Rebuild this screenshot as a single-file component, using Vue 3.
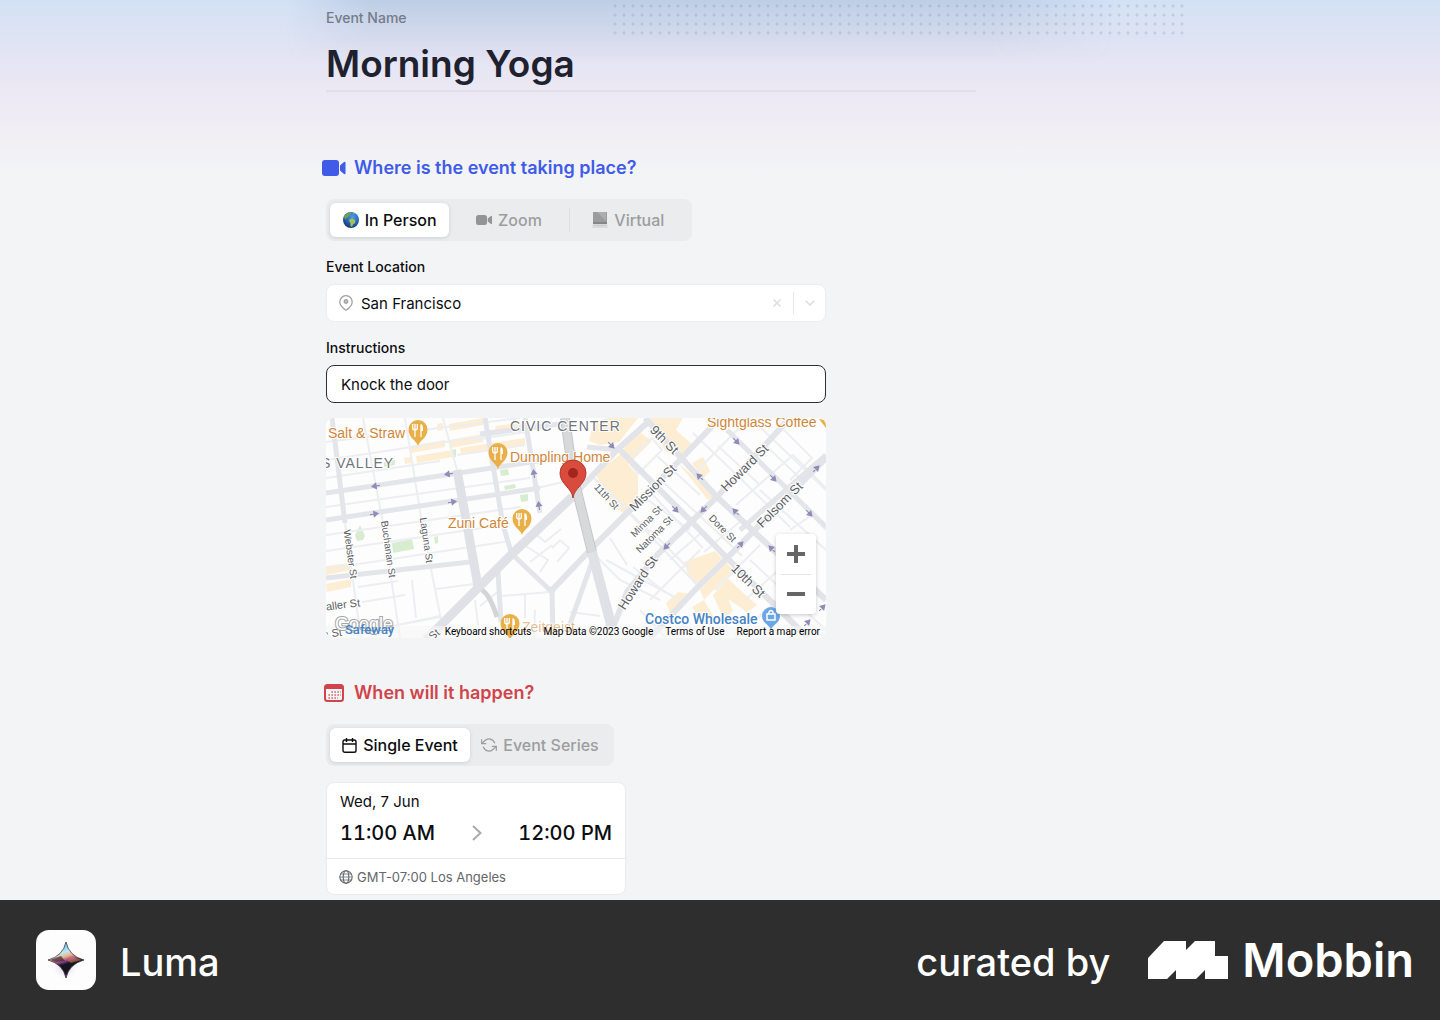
<script setup>
import { ref } from 'vue'

const eventName = ref('Morning Yoga')
const instructions = ref('Knock the door')
const eventPlace = ref('San Francisco')
const place = ref('person')
const kind = ref('single')

const minorRoads = [
  'M363 418L383 523L400 638', 'M405 418L422 523L442 625', 'M443 418L457 470',
  'M345 523L361 638', 'M326 460L565 424', 'M326 478L440 461', 'M326 442L520 418',
  'M326 507L530 478', 'M326 535L520 507', 'M326 551L510 524', 'M326 569L510 541',
  'M358 587L398 581', 'M362 602L405 595', 'M436 589L474 584',
  'M403 624L440 617', 'M365 632L440 616', 'M412 580L416 618', 'M502 596L550 592',
  'M525 594L525 618', 'M474 440L525 432', 'M457 455L525 445', 'M537 488L572 480',
  'M524 545L548 560L540 572M537 535L545 542L561 529M552 548L560 540L569 548L557 562',
  'M530 562L552 545', 'M593 477L630 514L700 588', 'M606 560L680 600', 'M592 552L620 580L660 600',
  'M610 538L627 565', 'M632 456L652 438L662 450L638 474L630 464', 'M650 492L703 548',
  'M663 482L715 530L742 556', 'M645 498L690 530', 'M656 455L700 495', 'M693 433L742 480L790 527',
  'M698 470L745 422', 'M718 446L760 485', 'M745 465L765 445L802 480', 'M736 505L793 455L826 488',
  'M760 490L826 550', 'M784 430L812 458L790 480', 'M770 507L808 470', 'M650 600L700 550',
  'M633 567L665 592', 'M650 530L690 570', 'M701 533L670 560', 'M704 552L742 520L790 565',
  'M745 600L790 560', 'M715 590L760 545', 'M735 638L780 598', 'M750 560L826 630',
  'M790 530L812 515L826 530', 'M570 612L600 616', 'M606 490L650 532', 'M480 606L500 590',
  'M535 610L534 638', 'M475 600L478 625', 'M640 610L666 638', 'M760 427L826 490'
]
const midRoads = [
  'M485 418L503 525L512 555', 'M525 418L540 513', 'M513 555L552 592L553 638',
  'M498 572L501 622', 'M570 624L592 562', 'M587 447L620 450', 'M480 434L560 424',
  'M326 520L540 488', 'M326 493L565 457', 'M332 418L345 523', 'M727 430L826 527',
  'M740 530L826 455', 'M326 578L470 562'
]
const mainRoads = [
  'M645 418L717 497L780 556L826 600', 'M620 450L693 523L727 558L808 638',
  'M720 418L680 460L592 548L552 590', 'M790 418L717 497L690 523L657 555L627 592L612 630',
  'M826 458L727 558L693 592L650 638', 'M647 423L617 450L572 497'
]
const arrows = [
  [376, 486, 172], [449, 474, 172], [374, 514, -8], [452, 502, -8], [534, 474, -98],
  [539, 506, -98], [611, 445, 45], [736, 441, 45], [773, 478, 45], [809, 513, 45],
  [700, 477, 225], [736, 512, 225], [704, 509, 135], [675, 509, 45], [667, 546, 135],
  [740, 545, -45], [816, 469, -45], [772, 549, 225], [822, 608, -45], [807, 623, -45]
]
const streets = [
  { t: '9th St', x: 664, y: 440, r: 45, s: 13 },
  { t: 'Mission St', x: 653, y: 488, r: -45, s: 13 },
  { t: 'Howard St', x: 745, y: 468, r: -45, s: 13 },
  { t: 'Folsom St', x: 780, y: 505, r: -45, s: 13 },
  { t: 'Howard St', x: 638, y: 583, r: -57, s: 13 },
  { t: '10th St', x: 748, y: 581, r: 45, s: 13 },
  { t: '11th St', x: 607, y: 496, r: 47, s: 10 },
  { t: 'Minna St', x: 646, y: 521, r: -45, s: 10 },
  { t: 'Natoma St', x: 654, y: 534, r: -45, s: 10 },
  { t: 'Dore St', x: 723, y: 528, r: 45, s: 10 },
  { t: 'Webster St', x: 351, y: 554, r: 82, s: 10 },
  { t: 'Buchanan St', x: 389, y: 549, r: 82, s: 10 },
  { t: 'Laguna St', x: 427, y: 540, r: 82, s: 10 },
  { t: 'Waller St', x: 338, y: 605, r: -7, s: 11 },
  { t: 'n St', x: 332, y: 633, r: -7, s: 11 },
  { t: 'St', x: 434, y: 634, r: -40, s: 11 }
]
const foodPins = [[418, 432], [498, 455], [522, 521], [510, 626]]
</script>

<template>
  <div class="page">
    <main class="content">
      <form class="form" @submit.prevent>
        <div class="title-field">
          <label for="event-name">Event Name</label>
          <input id="event-name" v-model="eventName" type="text" />
        </div>

        <section class="where">
          <h2 class="heading blue">
            <svg width="24" height="16" viewBox="0 0 24 16" fill="currentColor">
              <rect width="17" height="16" rx="3" />
              <path d="M18 5.600L22 2Q23.500 1 23.500 3V13Q23.500 15 22 14L18 10.400Z" />
            </svg>
            Where is the event taking place?
          </h2>
          <div class="segment three">
            <button type="button" :class="{ on: place === 'person' }" @click="place = 'person'">
              <svg width="16" height="16" viewBox="0 0 16 16">
                <defs>
                  <radialGradient id="sea" cx=".6" cy=".3" r=".75">
                    <stop offset="0" stop-color="#4f9ee8" /><stop offset=".6" stop-color="#2362b0" /><stop offset="1" stop-color="#143269" />
                  </radialGradient>
                </defs>
                <circle cx="8" cy="8" r="8" fill="url(#sea)" />
                <path d="M1 4.500Q3 1 6.500.5L8.500 1.500L7.500 3L5.500 4L5 5.500L3.500 6L2 8Z" fill="#6f9f55" />
                <path d="M7 7L9.500 6.500L12.500 8.500L12 11L10 12.500L9 15L7.500 14L7.500 11L6 9Z" fill="#a9bf5c" />
                <path d="M9.500.6L12 1.500L11 2.500Z" fill="#8fb466" />
              </svg>
              In Person
            </button>
            <button type="button" :class="{ on: place === 'zoom' }" @click="place = 'zoom'">
              <svg width="16" height="10" viewBox="0 0 16 10" fill="#929495">
                <rect width="11" height="10" rx="2.500" />
                <path d="M11.700 3.500L15 1Q16 .5 16 1.500V8.500Q16 9.500 15 9L11.700 6.500Z" />
              </svg>
              Zoom
            </button>
            <button type="button" class="divided" :class="{ on: place === 'virtual' }" @click="place = 'virtual'">
              <svg width="16" height="16" viewBox="0 0 16 16">
                <path d="M1 0H15V11H1Z" fill="#9b9c9d" /><path d="M5 0H14L14 9Z" fill="#acadae" />
                <path d="M1 10H15V12H1Z" fill="#858687" /><path d="M1 12H15L16 16H0Z" fill="#d8d9da" />
                <path d="M2 13.500H14" stroke="#cbcccd" />
              </svg>
              Virtual
            </button>
          </div>

          <div class="field">
            <label for="place">Event Location</label>
            <div class="combo">
              <svg width="14" height="16" viewBox="0 0 14 16" fill="none" stroke="#a0a1a3" stroke-width="1.300">
                <path d="M7 15.200C5.500 14.200.8 11 .8 6.900A6.200 6.200 0 0 1 13.200 6.900C13.200 11 8.500 14.200 7 15.200Z" />
                <circle cx="7" cy="6.500" r="1.800" fill="#c0c1c2" />
              </svg>
              <input id="place" v-model="eventPlace" type="text" />
              <button type="button" aria-label="Clear" @click="eventPlace = ''">
                <svg width="8" height="8" viewBox="0 0 8 8" stroke="#dcdddd" stroke-width="1.500"><path d="M.5.5L7.500 7.500M7.500.5L.5 7.500" /></svg>
              </button>
              <button type="button" class="open" aria-label="Open list">
                <svg width="10" height="6" viewBox="0 0 10 6" fill="none" stroke="#dcdddd" stroke-width="1.500"><path d="M.7.8L5 5L9.300.8" /></svg>
              </button>
            </div>
          </div>

          <div class="field">
            <label for="instructions">Instructions</label>
            <input id="instructions" v-model="instructions" class="text-box" type="text" />
          </div>

          <div class="map">
            <svg class="map-art" viewBox="326 418 500 220" preserveAspectRatio="xMidYMid slice">
              <defs>
                <g id="food">
                  <path d="M0 14C-1 9-9.500 6-9.500-2.500A9.500 9.500 0 0 1 9.500-2.500C9.500 6 1 9 0 14Z" fill="#e9b04a" />
                  <path d="M-3 -8V5M-5.300-8V-4Q-5.300-2-3-2Q-.7-2-.7-4V-8M3 5V-7.500" fill="none" stroke="#fff" stroke-width="1.300" />
                  <path d="M3-8Q5-7 5-4V-1H3Z" fill="#fff" />
                </g>
                <path id="arrow" d="M-4 0H2M0-2.500L4 0L0 2.500Z" fill="#8f8db8" stroke="#8f8db8" stroke-width="1.200" />
              </defs>
              <rect x="326" y="418" width="500" height="220" fill="#fdfdfd" />
              <g fill="#fdeed3">
                <path d="M449 424L483 418V425L450 431ZM449 440L483 434V442L450 448ZM410 446L445 440V447L411 453ZM416 456L453 450V457L417 463ZM460 448L525 438V446L461 455ZM495 426L525 422V429L496 433ZM404 458L411 457V463L405 464ZM437 424L443 423V430L438 431Z" />
                <path d="M593 423L607 418H638L619 442L600 445L589 441ZM637 430L652 441L626 467L618 457ZM650 418H683L676 430L692 444L681 460L664 450ZM595 473L620 455L638 476V500L625 514L611 505ZM679 464L708 500L715 496L682 466ZM692 463L703 457L710 471L703 479Z" />
                <path d="M684 562L715 551L722 558L697 585L688 574ZM700 590L726 562L733 570L704 600ZM713 595L728 578L740 590L757 605L747 612L728 599L733 611L724 620ZM666 603L678 592L690 594L671 615ZM692 607L704 600L714 618L706 625ZM326 566L351 563V570L326 575ZM326 584L351 579V587L327 592Z" />
              </g>
              <g fill="#d8edcf">
                <path d="M355 535L360 525L365 536L363 540L357 541ZM392 543L412 539L414 549L393 553ZM500 470L508 469L509 475L501 476ZM520 495L528 494V501L521 502ZM504 486L515 484L516 488L505 490ZM434 537L438 536V543L435 544ZM384 462L395 460V465L384 467ZM452 450L456 449V457L453 457Z" />
              </g>
              <g fill="none" stroke="#eceef1" stroke-width="2"><path v-for="d in minorRoads" :key="d" :d="d" /></g>
              <g fill="none" stroke="#e3e5ea" stroke-width="5"><path v-for="d in midRoads" :key="d" :d="d" /></g>
              <g fill="none" stroke="#e2e4e9" stroke-width="6"><path v-for="d in mainRoads" :key="d" :d="d" /></g>
              <g fill="none" stroke="#dfe1e6" stroke-width="9">
                <path d="M457 470L467 525L479 592" /><path d="M572 497L512 554L426 640" />
              </g>
              <g fill="none">
                <path d="M592 552L613 632" stroke="#dfe1e6" stroke-width="10" />
                <path d="M565 418L573 475L592 552" stroke="#c5c7ca" stroke-width="10" /><path d="M565 418L573 475L592 552" stroke="#d8d9db" stroke-width="8" />
                <path d="M482 590Q490 595 497 617" stroke="#d3d5d8" stroke-width="5" />
              </g>
              <use v-for="(a, i) in arrows" :key="i" href="#arrow" :transform="`translate(${a[0]} ${a[1]}) rotate(${a[2]})`" />
              <rect x="326" y="626" width="500" height="12" fill="#f7f7f8" opacity=".6" />
              <g class="streets">
                <text v-for="(s, i) in streets" :key="i" :transform="`translate(${s.x} ${s.y}) rotate(${s.r})`" :font-size="s.s" dy="4">{{ s.t }}</text>
              </g>
              <g class="district">
                <text x="510" y="431">CIVIC CENTER</text>
                <text x="321" y="468">S VALLEY</text>
              </g>
              <g class="spots">
                <text x="328" y="438">Salt &amp; Straw</text>
                <text x="510" y="462">Dumpling Home</text>
                <text x="448" y="528">Zuni Café</text>
                <text x="707" y="427">Sightglass Coffee</text>
                <text x="522" y="632" opacity=".5">Zeitgeist</text>
              </g>
              <path d="M819 419L826 420V428Z" fill="#e9b04a" />
              <use v-for="(p, i) in foodPins" :key="i" href="#food" :transform="`translate(${p[0]} ${p[1]})`" />
              <text class="google" x="335" y="630">Google</text>
              <g class="shops">
                <text class="plain" x="345" y="634">Safeway</text>
                <text x="645" y="624">Costco Wholesale</text>
              </g>
              <path d="M771 630C770 625 762 623 762 616A9 9 0 0 1 780 616C780 623 772 625 771 630Z" fill="#6ca6e6" />
              <path d="M767 614H775V620H767ZM769 614V612Q771 609 773 612V614" fill="none" stroke="#fff" stroke-width="1.500" />
              <path d="M573 498C572 488 560 484 560 473A13 13 0 0 1 586 473C586 484 574 488 573 498Z" fill="#d94b3d" stroke="#b93629" />
              <circle cx="573" cy="473" r="5" fill="#a3251b" />
            </svg>
            <div class="zoom-box">
              <button type="button" aria-label="Zoom in">
                <svg width="18" height="18" viewBox="0 0 18 18" stroke="#666" stroke-width="4"><path d="M0 9H18M9 0V18" /></svg>
              </button>
              <button type="button" aria-label="Zoom out">
                <svg width="18" height="18" viewBox="0 0 18 18" stroke="#666" stroke-width="4"><path d="M0 9H18" /></svg>
              </button>
            </div>
            <div class="map-links">
              <button type="button">Keyboard shortcuts</button>
              <span>Map Data ©2023 Google</span>
              <a href="#terms">Terms of Use</a>
              <a href="#report">Report a map error</a>
            </div>
          </div>
        </section>

        <section class="when">
          <h2 class="heading red">
            <svg width="24" height="18" viewBox="0 0 24 18">
              <rect x="3" y="1" width="18" height="16" rx="2.500" fill="none" stroke="currentColor" stroke-width="2" />
              <path d="M3 1H21V5H3Z" fill="currentColor" />
              <path d="M9.500 8H19M6.500 11H19M6.500 14H16" stroke="currentColor" stroke-width="1.300" stroke-dasharray="1.300 1.700" />
            </svg>
            When will it happen?
          </h2>
          <div class="segment two">
            <button type="button" :class="{ on: kind === 'single' }" @click="kind = 'single'">
              <svg width="15" height="15" viewBox="0 0 15 15" fill="none" stroke="currentColor" stroke-width="1.400">
                <rect x="1" y="2" width="13" height="12.300" rx="1.800" /><path d="M1 6H14M4.500 0V4M10.500 0V4" />
              </svg>
              Single Event
            </button>
            <button type="button" :class="{ on: kind === 'series' }" @click="kind = 'series'">
              <svg width="16" height="16" viewBox="0 0 24 24" fill="none" stroke="currentColor" stroke-width="1.800" stroke-linecap="round" stroke-linejoin="round">
                <path d="M1 4V10H7M23 20V14H17M20.490 9A9 9 0 0 0 5.640 5.640L1 10M23 14L18.360 18.360A9 9 0 0 1 3.510 15" />
              </svg>
              Event Series
            </button>
          </div>

          <div class="time-card">
            <div class="times">
              <p class="date">Wed, 7 Jun</p>
              <div class="range">
                <time datetime="11:00">11:00 AM</time>
                <svg width="10" height="16" viewBox="0 0 10 16" fill="none" stroke="#a9aaab" stroke-width="2"><path d="M1 1L8.500 8L1 15" /></svg>
                <time datetime="12:00">12:00 PM</time>
              </div>
            </div>
            <p class="zone">
              <svg width="14" height="14" viewBox="0 0 14 14" fill="none" stroke="currentColor" stroke-width="1.100">
                <circle cx="7" cy="7" r="6.200" /><ellipse cx="7" cy="7" rx="2.800" ry="6.200" /><path d="M.8 7H13.200M1.500 4H12.500M1.500 10H12.500" stroke-width=".8" />
              </svg>
              GMT-07:00 Los Angeles
            </p>
          </div>
        </section>
      </form>
    </main>

    <footer class="footer">
      <svg width="60" height="60" viewBox="0 0 60 60">
        <defs>
          <linearGradient id="gem" x1=".3" y1="0" x2=".6" y2="1">
            <stop offset="0" stop-color="#4da7c8" /><stop offset=".3" stop-color="#b9eaf8" /><stop offset=".42" stop-color="#f4b27e" />
            <stop offset=".52" stop-color="#9b4a92" /><stop offset=".62" stop-color="#17131f" /><stop offset=".85" stop-color="#17131f" /><stop offset="1" stop-color="#6e5a8a" />
          </linearGradient>
          <radialGradient id="glow"><stop offset="0" stop-color="#b39ac8" stop-opacity=".6" /><stop offset="1" stop-color="#fff" stop-opacity="0" /></radialGradient>
        </defs>
        <rect width="60" height="60" rx="13" fill="#fdfdfe" />
        <circle cx="29" cy="36" r="15" fill="url(#glow)" />
        <path d="M30 12Q33 26 48 30Q33 34 30 48Q27 34 12 30Q27 26 30 12Z" fill="url(#gem)" stroke="#241c2c" stroke-width=".7" />
        <path d="M14 30L25 26L29 31L20 32Z" fill="#362238" opacity=".7" />
        <path d="M31 30L37 27L46 30L35 33Z" fill="#e08b4f" opacity=".5" />
      </svg>
      <span class="app-name">Luma</span>
      <span class="curated">curated by</span>
      <svg class="mark" width="80" height="38" viewBox="0 0 80 38" fill="#fff">
        <path d="M0 17L16 0H38V9L47 0H67V15H80V38H57V29L48 38H28V29L19 38H0Z" />
      </svg>
      <span class="brand">Mobbin</span>
    </footer>
  </div>
</template>

<style>
body { margin: 0; background: #f3f4f6; }
</style>

<style scoped>
.page {
  min-height: 100vh;
  display: flex;
  flex-direction: column;
  overflow: hidden;
  font-family: Inter, "Liberation Sans", sans-serif;
  color: #0c0d0f;
  background: linear-gradient(#d2e2f5 0, #dfe3f3 40px, #eae7f4 80px, #f0ecf4 120px, #f3f4f6 170px);
}
* { box-sizing: border-box; }
svg { display: block; flex: none; }
button, input { font: inherit; color: inherit; border: 0; padding: 0; margin: 0; background: none; outline: none; }
button { cursor: pointer; }
.content { flex: 1; padding: 0 24px 4px; }
.form { position: relative; max-width: 788px; margin: 0 auto; }
.form::before {
  content: "";
  position: absolute;
  top: 0;
  left: -40px;
  right: 0;
  height: 64px;
  background: linear-gradient(rgb(110 130 170 / 20%), transparent);
  mask-image: linear-gradient(90deg, transparent, #000 10%, #000 85%, transparent);
}
.form::after {
  content: "";
  position: absolute;
  top: 2px;
  left: 285px;
  width: 576px;
  height: 36px;
  background: radial-gradient(circle at 4px 4px, rgb(120 130 175 / 24%) 1px, transparent 2px) 0 0 / 9px 9px;
}
.title-field, section { position: relative; z-index: 1; }
.title-field { max-width: 650px; padding-top: 8px; }
.title-field label { display: block; font-size: 14px; line-height: 20px; font-weight: 500; color: #747b88; }
.title-field input {
  display: block;
  width: 100%;
  height: 64px;
  padding: 12px 0 4px;
  border-bottom: 2px solid #e3dfea;
  font-size: 37px;
  line-height: 46px;
  font-weight: 600;
  color: #20212f;
}
.where { padding-top: 64px; max-width: 500px; }
.when { padding-top: 43px; max-width: 500px; }
.heading { display: flex; align-items: center; gap: 8px; margin: 0 0 19px -4px; font-size: 18px; line-height: 24px; font-weight: 600; }
.blue { color: #3f5be8; }
.red { color: #d0444a; }
.segment { display: grid; padding: 4px; border-radius: 8px; background: #ebeced; font-size: 16px; font-weight: 500; line-height: 24px; }
.three { grid-template-columns: repeat(3, 1fr); max-width: 366px; }
.two { grid-template-columns: 1fr 1fr; max-width: 288px; }
.segment button { position: relative; display: flex; align-items: center; justify-content: center; gap: 6px; height: 34px; border-radius: 6px; color: #9c9d9f; white-space: nowrap; }
.segment .on { background: #fff; color: #0c0d0f; box-shadow: 0 1px 4px rgb(0 0 0 / 12%); }
.divided::before { content: ""; position: absolute; left: 0; top: 5px; height: 24px; border-left: 1px solid #dcddde; }
.field { margin-top: 16px; }
.field label { display: block; font-size: 14px; line-height: 20px; font-weight: 500; margin-bottom: 7px; }
.combo { display: flex; align-items: center; height: 38px; padding-left: 12px; border: 1px solid #eceded; border-radius: 8px; background: #fff; font-size: 15px; }
.combo input { flex: 1; min-width: 0; padding-left: 8px; }
.combo button { display: flex; align-items: center; justify-content: center; width: 32px; height: 22px; }
.combo .open { border-left: 1px solid #e6e7e8; }
.text-box { display: block; width: 100%; height: 38px; padding: 0 14px; border: 1px solid #2f3032; border-radius: 8px; background: #fff; font-size: 15px; }
.map { position: relative; height: 220px; margin-top: 15px; border-radius: 8px; overflow: hidden; }
.map-art { width: 100%; height: 100%; font-family: "Liberation Sans", Arial, sans-serif; }
.streets text { fill: #5b5e63; text-anchor: middle; paint-order: stroke; stroke: #fff; stroke-width: 2px; }
.district text { font-size: 14px; letter-spacing: 1px; fill: #6f757d; paint-order: stroke; stroke: #fff; stroke-width: 2px; }
.spots text { font-size: 14px; fill: #cf8637; paint-order: stroke; stroke: #fff; stroke-width: 2px; }
.shops text { fill: #4583c4; font-family: Roboto, sans-serif; font-weight: 500; font-size: 14px; paint-order: stroke; stroke: #fff; stroke-width: 2px; }
.shops .plain { font-size: 13px; stroke: none; }
.google { font-size: 18px; fill: #fff; stroke: #a3a5a7; stroke-width: 2px; paint-order: stroke; }
.zoom-box { position: absolute; right: 10px; top: 116px; width: 40px; border-radius: 4px; background: #fff; box-shadow: 0 1px 4px rgb(0 0 0 / 20%); }
.zoom-box button { display: flex; align-items: center; justify-content: center; width: 40px; height: 40px; }
.zoom-box button + button::before { content: ""; position: absolute; top: 40px; left: 5px; width: 30px; border-top: 1px solid #e6e6e6; }
.map-links { position: absolute; right: 6px; bottom: 0; display: flex; gap: 12px; font: 10px/12px Roboto, sans-serif; color: #000; white-space: nowrap; }
.map-links a { color: inherit; text-decoration: none; }
.time-card { max-width: 300px; margin-top: 16px; border: 1px solid #eaebec; border-radius: 8px; background: #fff; }
.times { padding: 8px 13px; height: 75px; }
.date { margin: 0; font-size: 15px; line-height: 22px; }
.range { display: flex; align-items: center; justify-content: space-between; margin-top: 4px; font-size: 20px; line-height: 32px; font-weight: 500; font-variant-numeric: tabular-nums; }
.zone { display: flex; align-items: center; gap: 4px; margin: 0; padding: 0 12px; height: 36px; border-top: 1px solid #eaebec; font-size: 13px; color: #65676b; }
.footer { display: flex; align-items: center; height: 120px; padding: 0 26px 0 36px; background: #2e2e2e; color: #fff; white-space: nowrap; }
.app-name, .curated { font-size: 38px; line-height: 48px; font-weight: 500; }
.app-name { margin-left: 24px; padding-top: 4px; }
.curated { margin-left: auto; padding-top: 4px; }
.mark { margin-left: 38px; }
.brand { margin-left: 14px; font-size: 47px; line-height: 56px; font-weight: 600; }
</style>
